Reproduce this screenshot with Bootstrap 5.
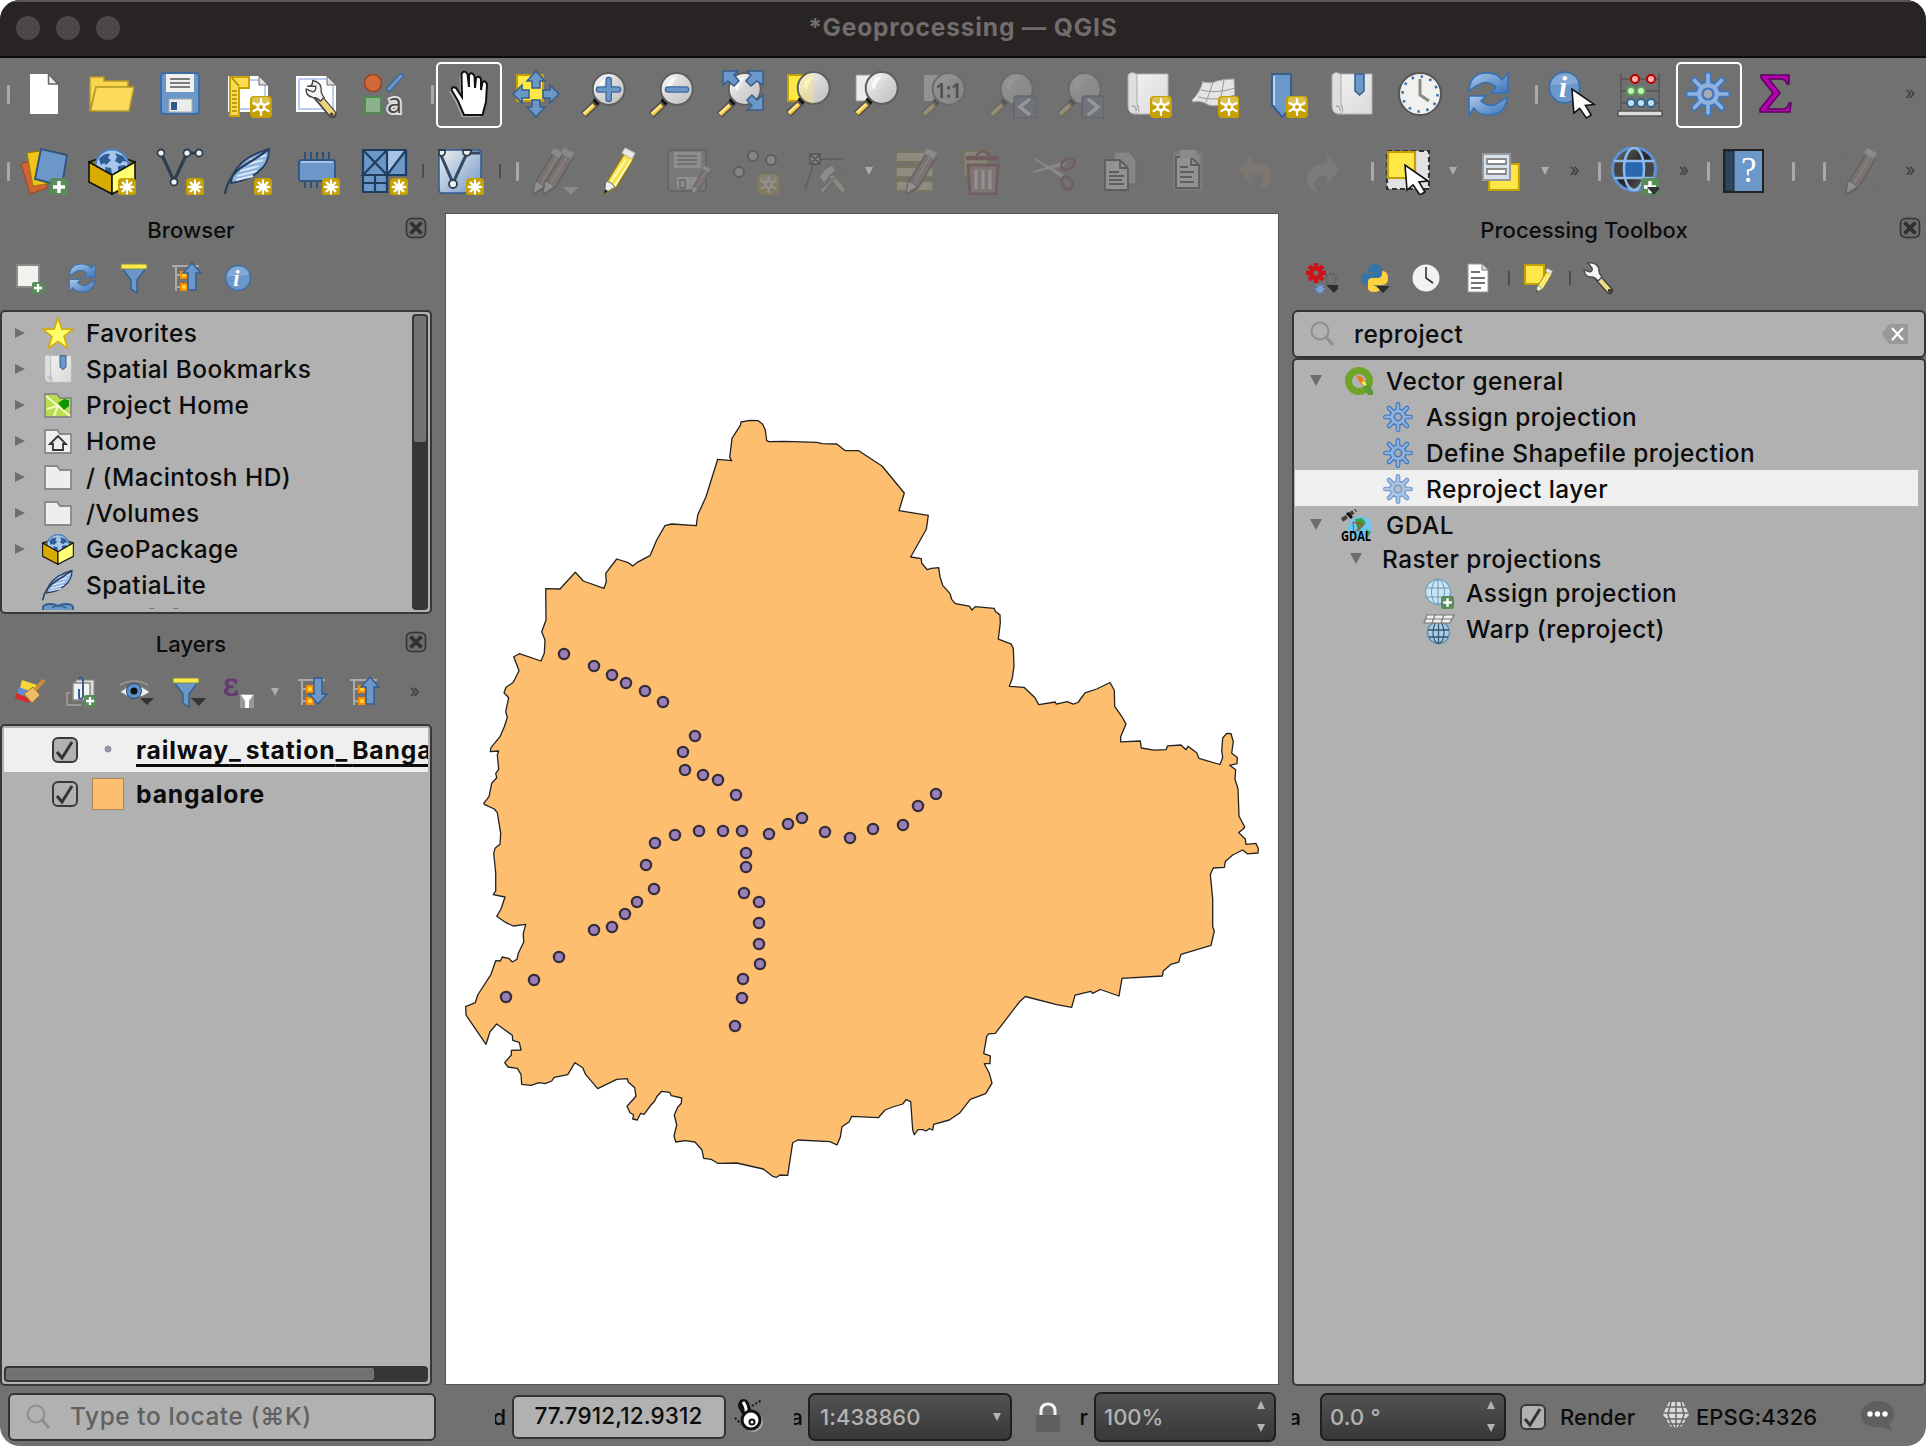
<!DOCTYPE html>
<html lang="en">
<head>
<meta charset="utf-8">
<title>*Geoprocessing — QGIS</title>
<link href="https://cdn.jsdelivr.net/npm/bootstrap@5.3.0/dist/css/bootstrap.min.css" rel="stylesheet">
<style>
html,body{width:1926px;height:1446px;overflow:hidden;background:#fff}
body{font-family:Inter,"Liberation Sans",sans-serif;font-size:24.4px;font-weight:500;letter-spacing:.48px;line-height:1;color:#0c0c0c;white-space:nowrap}
svg{display:block;flex:none;overflow:visible;letter-spacing:0}
.win{width:1926px;height:1446px;background:#717171;border-radius:20px;overflow:hidden}
.titlebar{height:58px;background:#282423;border-top:2px solid #5a5756;border-bottom:2px solid #0a0a0a;color:#716d6c;font-weight:700;font-size:24.5px;letter-spacing:.85px;padding-bottom:4px}
.lights{left:16px;top:14px;gap:16px}
.lights i{width:24px;height:24px;border-radius:50%;background:#4c4847}
.bar1{height:72px}.bar2{height:82px}
.cell{width:68px;flex:none;display:flex;align-items:center;justify-content:center}
.cell>svg{width:48px;height:48px}
.off{opacity:.27}
.bar2 .off{opacity:.23;filter:saturate(.7)}
.boxed{position:relative}
.boxed::before{content:"";position:absolute;left:50%;top:50%;width:66px;height:66px;margin:-32px 0 0 -32px;border:2px solid #fff;border-radius:5px}
.grip{flex:none;display:flex;justify-content:flex-end}
.grip::after{content:"";width:3px;height:19px;border-radius:1px;background:#a9a9a9}
.w3x{width:3px}.w10{width:10px}.w11{width:11px}.w16{width:16px}.w17{width:17px}.w31{width:31px}
.sepr{width:9px;flex:none;display:flex;justify-content:center}
.sepr::after{content:"";width:2px;height:14px;background:#4c4c4c}
.tri{flex:none;display:flex;justify-content:center;align-items:center}
.tri::after{content:"";border:4px solid transparent;border-top:8px solid #adadad;border-bottom:0}
.more{flex:none;text-align:center;color:#3b3b3b;font-size:18px;font-weight:400;padding-bottom:2px}
.left{width:432px}.mapbox{width:834px;margin:1px 13px 1px 13px;border:1px solid #555;background:#fff}
.right{width:634px}
.ptitle{font-size:22px;letter-spacing:.05px;text-align:center;padding-top:0}
.psmall{width:52px;flex:none;display:flex;justify-content:center}
.psmall>svg{width:32px;height:32px}
.rsmall{width:52px;flex:none;display:flex;justify-content:center}
.rsmall>svg{width:32px;height:32px}
.pane{background:#b1b1b1;border:2px solid #383838;border-radius:5px;overflow:hidden}
.trow{height:36px;display:flex;align-items:center;flex:none;line-height:26px;padding-top:1px}
.trow svg.ti{width:32px;height:32px}
.ar{width:0;height:0;border:5px solid transparent;border-left:10px solid #6d6d6d;border-right:0;flex:none}
.ad{width:0;height:0;border:6px solid transparent;border-top:11px solid #6d6d6d;border-bottom:0;flex:none}
.vbar{width:16px;background:#363636;border-radius:4px;padding:2px}
.thumb{background:#717171;border-radius:3px;box-shadow:inset 0 0 0 1px #777}
.pick{background:#efefef}
.chk{width:26px;height:26px;border:2px solid #3a3a3a;border-radius:6px;flex:none;background:#b1b1b1}
.lay{font-weight:700;font-size:24.7px;letter-spacing:.85px;overflow:hidden;padding-bottom:1px}
.wide{letter-spacing:5px}
.fieldx{background:#b1b1b1;border:2px solid #333;border-radius:6px;display:flex;align-items:center;flex:none}
.spinx{background:linear-gradient(#525252,#383838);border:2px solid #1f1f1f;border-radius:7px;display:flex;align-items:center;flex:none;color:#b4b4b4;font-size:22px}
.up{border:4px solid transparent;border-bottom:8px solid #b4b4b4;border-top:0}
.dn{border:4px solid transparent;border-top:8px solid #b4b4b4;border-bottom:0}
.status{height:60px;font-size:22px;letter-spacing:0;padding-top:1px}
.clip{overflow:hidden;flex:none;display:flex;justify-content:flex-end;height:26px;align-items:center}
</style>
<script src="https://cdn.jsdelivr.net/npm/bootstrap@5.3.0/dist/js/bootstrap.bundle.min.js"></script>
</head>
<body>
<svg width="0" height="0" class="position-absolute">
<defs>
<linearGradient id="lens" x1="0" y1="0" x2="1" y2="1"><stop offset="0" stop-color="#fff"/><stop offset=".5" stop-color="#d6d6d6"/><stop offset="1" stop-color="#bfbfbf"/></linearGradient>
<linearGradient id="blu" x1="0" y1="0" x2="1" y2="1"><stop offset="0" stop-color="#a9c9ec"/><stop offset="1" stop-color="#3b74b8"/></linearGradient>
<linearGradient id="pap" x1="0" y1="0" x2="1" y2="1"><stop offset="0" stop-color="#f2f2f2"/><stop offset="1" stop-color="#d9d9d9"/></linearGradient>
<linearGradient id="vg" x1="0" y1="0" x2="1" y2="1"><stop offset="0" stop-color="#efefef"/><stop offset="1" stop-color="#6f98ca"/></linearGradient>
<linearGradient id="gband" x1="0" y1="0" x2="1" y2="1"><stop offset="0" stop-color="#777"/><stop offset=".5" stop-color="#222"/><stop offset="1" stop-color="#777"/></linearGradient>
</defs>
<symbol id="badge" viewBox="0 0 22 22"><rect width="22" height="22" rx="4" fill="#c6a000"/><rect x="2" y="1" width="18" height="9" rx="3" fill="#dbc14d"/><g stroke="#fff" stroke-width="2.2" stroke-linecap="round"><path d="M11 3v16M3.500 7l15 8M3.500 15l15-8"/></g><circle cx="11" cy="11" r="4.500" fill="#fff"/><circle cx="11" cy="11" r="2" fill="#c6a000"/></symbol>
<symbol id="star" viewBox="0 0 18 18"><rect width="18" height="18" rx="4" fill="#c6a000"/><path d="M9 2.500v13M2.800 9h12.400M4.600 4.600l8.800 8.800M4.600 13.400l8.800-8.800" stroke="#fff" stroke-width="2.300" stroke-linecap="round"/></symbol>
<symbol id="plus" viewBox="0 0 18 18"><rect width="18" height="18" rx="3" fill="#5a8c5a"/><path d="M9 3v12M3 9h12" stroke="#fff" stroke-width="3.400"/></symbol>
<symbol id="mag" viewBox="0 0 48 48"><path d="M17 32L3.500 45" stroke="#555" stroke-width="7.500"/><path d="M14 35L4 44.500" stroke="#fcca3f" stroke-width="4"/><path d="M13 35L3.500 43.500" stroke="#fff0b0" stroke-width="1.500"/><path d="M14 29l5 5" stroke="#111" stroke-width="4"/><circle cx="28.700" cy="19" r="16" fill="url(#lens)" stroke="#5f5f5f" stroke-width="2"/><path d="M18 17q3-9 11-10q-6 6-7 14z" fill="#fff" opacity=".8"/></symbol>
<symbol id="new" viewBox="0 0 48 48"><path d="M10 4h18.500l9.500 10v30H10z" fill="#fff"/><path d="M28.500 4l9.500 10h-9.500z" fill="#eee" stroke="#666" stroke-width="1.500"/></symbol>
<symbol id="open" viewBox="0 0 48 48"><path d="M2 41V7h14v4h24v6H8z" fill="#fad64e" stroke="#b59a28" stroke-width="1.500"/><path d="M2.500 41L8 17h38l-5 24z" fill="#fdd95c" stroke="#b59a28" stroke-width="1.500"/></symbol>
<symbol id="save" viewBox="0 0 48 48"><rect x="5" y="3" width="38" height="41" rx="3" fill="#6b97c9" stroke="#3e6ca3" stroke-width="2"/><path d="M10 4h28v18H10z" fill="#f0f0ee"/><path d="M14 9h20M14 13h20M14 17h20" stroke="#555" stroke-width="1.500"/><path d="M13 29h23v13H13z" fill="#ececec" stroke="#aaa"/><path d="M15 32h6v8h-6z" fill="#2f5a8c"/></symbol>
<symbol id="layout" viewBox="0 0 48 48"><path d="M4 6h31l9 9v27H4z" fill="#fff"/><path d="M8 10h27M41 15v24H8" fill="none" stroke="#bccdf5" stroke-width="2"/><path d="M35 6v9h9z" fill="#ddd" stroke="#666"/><path d="M6 7h19v11H15v28H6z" fill="#fbdc4e" stroke="#c9a100" stroke-width="2"/><path d="M8 21h5M8 25h5M8 29h5M8 33h5M8 37h5M8 41h5M8 8l7 8" stroke="#a88800" stroke-width="1.500"/><use href="#badge" x="26" y="26" width="22" height="22"/></symbol>
<symbol id="wrench" viewBox="0 0 48 48"><path d="M24 24L40 43" stroke="#444" stroke-width="9" stroke-linecap="round"/><path d="M27 27L39.500 42" stroke="#eed27a" stroke-width="6" stroke-linecap="round"/><path d="M13 13q6 1 6-6q10 2 9 12q1 4 3 6l-4 4q-3-4-8-4q-8-2-7-9l7 3q4-1 3-6z" fill="#f4f4f4" stroke="#444" stroke-width="1.500"/><circle cx="39" cy="43" r="2" fill="#444"/></symbol>
<symbol id="wrench2" viewBox="0 0 32 32"><path d="M17 17L27.500 28.500" stroke="#333" stroke-width="7" stroke-linecap="round"/><path d="M18 18L27 28" stroke="#eed98c" stroke-width="4.500" stroke-linecap="round"/><path d="M2 8l6 2q3-1 2-4L6 1q9-1 11 6-1 4 3 8l-4 4q-3-4-7-4-6 0-7-7z" fill="#f4f4f4" stroke="#444" stroke-width="1.300"/><circle cx="27.500" cy="28.500" r="1.700" fill="#333"/></symbol>
<symbol id="layman" viewBox="0 0 48 48"><path d="M4 6h31l9 9v27H4z" fill="#fff"/><path d="M7 9h27M41 15v24H7V9" fill="none" stroke="#bccdf5" stroke-width="2"/><path d="M35 6v9h9z" fill="#ddd" stroke="#666"/><use href="#wrench" x="3" y="4" width="45" height="45"/></symbol>
<symbol id="style" viewBox="0 0 48 48"><circle cx="13" cy="13" r="8.500" fill="#d1683a" stroke="#9d4318" stroke-width="1.500"/><path d="M29 19L41 6" stroke="#3f6797" stroke-width="6" stroke-linecap="round"/><path d="M29 19L41 6" stroke="#6c97ca" stroke-width="3" stroke-linecap="round"/><path d="M5 27h16v16H5z" fill="#8db08d" stroke="#4f8a4f" stroke-width="2"/></symbol>
<symbol id="hand" viewBox="0 0 48 48"><path d="M20 45L14 31 7.500 20Q8 16 12 18L18 27 17.500 4Q20-1 23.500 4L25 17V5Q27.500 1 30.500 6L31 18 32 8Q35 5 37 9V20L38.500 12Q41 10 43 14L42 32 38.500 45z" transform="translate(-2 2)" fill="#aaa"/><path d="M20 45L14 31 7.500 20Q8 16 12 18L18 27 17.500 4Q20-1 23.500 4L25 17V5Q27.500 1 30.500 6L31 18 32 8Q35 5 37 9V20L38.500 12Q41 10 43 14L42 32 38.500 45z" fill="#fff" stroke="#111" stroke-width="2"/></symbol>
<symbol id="pan" viewBox="0 0 48 48"><path d="M5 5h26v26H5z" fill="#fde847" stroke="#c6a000" stroke-width="2"/><g fill="#6b97c9" stroke="#375d8c" stroke-width="1.500"><path d="M24 1l9 10h-5v7h-8v-7h-5z"/><path d="M24 47l9-10h-5v-7h-8v7h-5z"/><path d="M1 24l9-9v5h7v8h-7v5z"/><path d="M47 24l-9-9v5h-7v8h7v5z"/></g></symbol>
<symbol id="zin" viewBox="0 0 48 48"><use href="#mag"/><path d="M28.700 10v19M19 19.500h19" stroke="#3d679a" stroke-width="6.500" stroke-linecap="round"/><path d="M28.700 10v19M19 19.500h19" stroke="#6b97c9" stroke-width="4" stroke-linecap="round"/></symbol>
<symbol id="zout" viewBox="0 0 48 48"><use href="#mag"/><path d="M20 19.500h18" stroke="#3d679a" stroke-width="6.500" stroke-linecap="round"/><path d="M20 19.500h18" stroke="#6b97c9" stroke-width="4" stroke-linecap="round"/></symbol>
<symbol id="zfull" viewBox="0 0 48 48"><use href="#mag"/><g fill="#6b97c9" stroke="#375d8c" stroke-width="1.500"><path d="M7 1h15l-4 4 5 6-5 5-6-5-5 4z"/><path d="M47 1H31l4 4-5 6 5 5 6-5 6 4z"/><path d="M47 40H31l5-4-5-6 5-5 5 5 6-5z"/></g></symbol>
<symbol id="zsel" viewBox="0 0 48 48"><path d="M4 5h18v26H4z" fill="#fde847" stroke="#c6a000" stroke-width="2"/><use href="#mag" x="1" y="-1"/><path d="M30 3.500v30q-14-1-15-15 1-14 15-15z" fill="#fbe96a" opacity=".4"/></symbol>
<symbol id="zlay" viewBox="0 0 48 48"><path d="M4 5h18v26H4z" fill="#ececea" stroke="#999" stroke-width="1"/><use href="#mag" x="1" y="-1"/></symbol>
<symbol id="znat" viewBox="0 0 48 48"><path d="M4 5h18v26H4z" fill="#ececea"/><use href="#mag"/></symbol>
<symbol id="zprev" viewBox="0 0 48 48"><use href="#mag"/><rect x="26" y="26" width="22" height="22" rx="2" fill="#6b7f99" stroke="#223"/><path d="M42 29l-10 8 10 8" fill="none" stroke="#fff" stroke-width="3.500"/></symbol>
<symbol id="znext" viewBox="0 0 48 48"><use href="#mag"/><rect x="26" y="26" width="22" height="22" rx="2" fill="#6b7f99" stroke="#223"/><path d="M32 29l10 8-10 8" fill="none" stroke="#fff" stroke-width="3.500"/></symbol>
<symbol id="scroll" viewBox="0 0 48 48"><path d="M8 4h36v40H10q6-2 4-9H12z" fill="url(#pap)" stroke="#b5b5b5"/><path d="M4 5q4-5 9 0v30q5 9-3 9-6-1-6-8z" fill="#dedede" stroke="#aaa"/><path d="M8 36q5 0 4 5" fill="none" stroke="#888"/></symbol>
<symbol id="nmap" viewBox="0 0 48 48"><use href="#scroll"/><use href="#badge" x="26" y="26" width="22" height="22"/></symbol>
<symbol id="n3d" viewBox="0 0 48 48"><path d="M12 12q9 2 14-1 7-2 17-2l1 26-13-1q-10 4-17-1-6-3-12-1l-1-2q8-7 11-19z" fill="#e4e4e4" stroke="#aaa"/><path d="M10 20q15 4 34-2M7 27q18 5 37-2M22 12q-3 10-7 20M33 10q-2 14-5 24" fill="none" stroke="#999"/><use href="#badge" x="27" y="26" width="22" height="22"/></symbol>
<symbol id="nbm" viewBox="0 0 48 48"><path d="M12 4h19v34l-9 9-10-12z" fill="#6b97c9" stroke="#365e8e" stroke-width="2"/><path d="M14 6v29" stroke="#bcd4ee" stroke-width="2"/><use href="#badge" x="26" y="26" width="22" height="22"/></symbol>
<symbol id="bms" viewBox="0 0 48 48"><use href="#scroll"/><path d="M27 4h9v17l-4.500 4L27 21z" fill="#6b97c9" stroke="#365e8e" stroke-width="1.500"/></symbol>
<symbol id="clock" viewBox="0 0 48 48"><circle cx="24" cy="24" r="21" fill="#f1f1ef" stroke="#555" stroke-width="2"/><circle cx="24" cy="24" r="17.500" fill="none" stroke="#3f74ac" stroke-width="2.600" stroke-dasharray="2.600 6.563"/><path d="M24 9v16l9 6" fill="none" stroke="#8a8a86" stroke-width="3"/></symbol>
<symbol id="refresh" viewBox="0 0 48 48"><path d="M5 21Q6 3 23 3q11 0 15 7l6-7v20H27l5-6q-9-8-18-2-5 3-9 6z" fill="url(#blu)" stroke="#3470b5" stroke-width="1.500"/><path d="M43 27q-1 18-18 18-11 0-15-7l-5 7V26h17l-5 5q9 8 17 2 5-3 9-6z" fill="url(#blu)" stroke="#3470b5" stroke-width="1.500"/></symbol>
<symbol id="info" viewBox="0 0 48 48"><circle cx="24" cy="24" r="21" fill="#6b97c9" stroke="#3d6ea6" stroke-width="2.500"/><path d="M5 20Q8 6 24 5t19 13q-20 4-38 2z" fill="#9dbbe0" opacity=".5"/></symbol>
<symbol id="cursor" viewBox="0 0 26 32"><path d="M1 1l2 25 6-5 7 10 5-3-6-10 9-1z" fill="#fff" stroke="#111" stroke-width="1.600"/></symbol>
<symbol id="abacus" viewBox="0 0 48 48"><path d="M5 4v38M43 4v38M5 9h38M5 21h38M5 33h38" stroke="#555" stroke-width="1.500"/><path d="M2 41h44v5H2z" fill="#ddd" stroke="#555" stroke-width="1.500"/><g stroke-width="2"><g fill="#ffb0b0" stroke="#b00"><circle cx="19" cy="9" r="4"/><circle cx="35" cy="9" r="4"/></g><g fill="#c8f5b8" stroke="#58a058"><circle cx="15" cy="21" r="4"/><circle cx="25" cy="21" r="4"/></g><g fill="#bfe3f5" stroke="#356488"><circle cx="15" cy="33" r="4"/><circle cx="25" cy="33" r="4"/><circle cx="35" cy="33" r="4"/></g></g></symbol>
<symbol id="gear" viewBox="0 0 48 48"><path d="M24 5v38M5 24h38M10.500 10.500l27 27M10.500 37.500l27-27" stroke="#3d78c4" stroke-width="7" stroke-linecap="round"/><circle cx="24" cy="24" r="13" fill="#3d78c4"/><path d="M24 5v38M5 24h38M10.500 10.500l27 27M10.500 37.500l27-27" stroke="#91b1dc" stroke-width="3.600" stroke-linecap="round"/><circle cx="24" cy="24" r="11" fill="#91b1dc"/><circle cx="24" cy="24" r="5.500" fill="#a9abb0" stroke="#3d78c4" stroke-width="2.200"/></symbol>
<symbol id="sigma" viewBox="0 0 48 48"><path d="M9 5h28v9h-2q-1-5-7-5H17l11 14-13 16h15q6 0 7-6h2l-1 9H8v-3l13-16L9 8z" fill="#b300b0" stroke="#5d005c" stroke-width="1.500"/></symbol>
<symbol id="dsm" viewBox="0 0 48 48"><path d="M1 17l18-6 8 30-17 6z" fill="#cf6534" stroke="#97461f"/><path d="M7 6l20-3 4 33-18 3z" fill="#f0c419" stroke="#9c7d00"/><path d="M21 2l26 6-5 31-27-7z" fill="#6b97c9" stroke="#34557c" stroke-width="2"/><use href="#plus" x="30" y="31" width="18" height="18"/></symbol>
<symbol id="gpkg" viewBox="0 0 48 48"><path d="M1 15l23-8 23 8-23 15z" fill="#8b7a20" stroke="#111" stroke-width="1.600"/><circle cx="24" cy="19" r="16.500" fill="#a8c6ec" stroke="#4a80bd" stroke-width="2"/><path d="M11 12q5-6 11-5l-2 4 3 2-5 5-2-2-3 2zM17 20l6 1 1 6-3 3-3-4zM27 6l8 3 4 6-4-1-3 3-5-3 2-4zM30 19l7-1 1 5-4 5-4-4z" fill="#2f5c92"/><path d="M1 15l23 13v19L1 35z" fill="#d7ab00" stroke="#111" stroke-width="1.600"/><path d="M47 15L24 28v19l23-12z" fill="#ffff74" stroke="#111" stroke-width="1.600"/></symbol>
<symbol id="ngpkg" viewBox="0 0 48 48"><use href="#gpkg"/><use href="#star" x="30" y="31" width="18" height="18"/></symbol>
<symbol id="nshp" viewBox="0 0 48 48"><path d="M5 6l13 28L31 6h12" fill="none" stroke="#2c3f52" stroke-width="3.200"/><g fill="#f2f2f2" stroke="#2c3f52" stroke-width="1.800"><circle cx="5" cy="6" r="3.500"/><circle cx="18" cy="35" r="3.500"/><circle cx="31" cy="6" r="3.500"/><circle cx="43" cy="6" r="3.500"/></g><use href="#star" x="30" y="31" width="18" height="18"/></symbol>
<symbol id="feather" viewBox="0 0 48 48"><path d="M7 36Q8 22 24 11 34 5 45 2q0 15-10 22-9 9-28 12z" fill="#8fb5e2" stroke="#263f5e" stroke-width="1.800"/><path d="M13 29l20-5M16 24l19-5M21 18l18-5M26 13l16-5M12 33l17-4" stroke="#dceafa" stroke-width="1.800"/><path d="M1 47q3-19 20-29Q33 11 45 2" fill="none" stroke="#263f5e" stroke-width="2.200"/></symbol>
<symbol id="nfeather" viewBox="0 0 48 48"><use href="#feather"/><use href="#star" x="30" y="31" width="18" height="18"/></symbol>
<symbol id="chip" viewBox="0 0 48 48"><path d="M13 5v36M19 5v36M25 5v36M31 5v36M37 5v36" stroke="#2f5079" stroke-width="2"/><rect x="7" y="13" width="36" height="21" rx="2" fill="#6b97c9" stroke="#2f5684" stroke-width="1.800"/><path d="M9 15h32" stroke="#bcd2ec" stroke-width="1.500"/><use href="#star" x="30" y="31" width="18" height="18"/></symbol>
<symbol id="mesh" viewBox="0 0 48 48"><path d="M3 3h43v25H27v17H3z" fill="#6b97c9"/><path d="M27 28V3h19z" fill="#a5c4e8"/><path d="M3 3h43v25H27v17H3zM3 3l24 25M27 3L3 28h24V3M46 3L27 28M3 36h24M15 28v17" fill="none" stroke="#1f3d5f" stroke-width="2.200"/><use href="#star" x="30" y="31" width="18" height="18"/></symbol>
<symbol id="virt" viewBox="0 0 48 48"><rect x="2" y="3" width="42" height="43" rx="3" fill="url(#vg)" stroke="#2f5b90" stroke-width="1.500"/><path d="M3 6l13 30L30 6h13" fill="none" stroke="#354a60" stroke-width="3"/><g fill="#f2f2f2" stroke="#2c3f52" stroke-width="1.800"><path d="M2 3h6q1 5-3 6l-3-1zM26 3h8q0 5-4 6-5-1-4-6z"/><circle cx="16" cy="37" r="4"/></g><use href="#star" x="29" y="31" width="18" height="18"/></symbol>
<symbol id="pencil" viewBox="0 0 48 48"><path d="M30 7l10 4-18 30-11 6 1-11z" fill="#f3e14e" stroke="#8b7d1d" stroke-width="1.500"/><path d="M32 12L15 38M37 13L20 40" stroke="#fff9b3" stroke-width="2"/><path d="M12 34l-2 13 11-7q-3-5-9-6z" fill="#eee" stroke="#666"/><path d="M11 42l-1 5 4-3z" fill="#222"/><path d="M28 6l3-5 10 5-3 6z" fill="#e8e8e8" stroke="#bbb"/></symbol>
<symbol id="bpen" viewBox="0 0 48 48"><path d="M30 7l10 4-18 30-11 6 1-11z" fill="#a87a70" stroke="#442f2c" stroke-width="1.500"/><path d="M34 10L17 38" stroke="#d3b0a8" stroke-width="1.500"/><path d="M12 34l-2 13 11-7q-3-5-9-6z" fill="#eee" stroke="#333"/><path d="M28 6l3-5 10 5-3 6z" fill="#ddd" stroke="#aaa"/></symbol>
<symbol id="pens" viewBox="0 0 48 48"><use href="#bpen" x="-8"/><use href="#bpen" x="2"/><path d="M32 40h16l-8 8z" fill="#ddd"/></symbol>
<symbol id="sedit" viewBox="0 0 48 48"><rect x="3" y="3" width="38" height="41" rx="3" fill="#8b9099" stroke="#3b4350" stroke-width="2"/><path d="M9 5h27v16H9zM12 30h20v12H12z" fill="#eee"/><path d="M12 9h20M12 13h20M12 17h20" stroke="#444" stroke-width="1.500"/><path d="M15 33h5v8h-5z" fill="none" stroke="#444" stroke-width="1.500"/><use href="#bpen" x="20" y="18" width="30" height="30"/></symbol>
<symbol id="points" viewBox="0 0 48 48"><g fill="#c8d0c8" stroke="#223" stroke-width="2"><circle cx="20" cy="9" r="5"/><circle cx="38" cy="13" r="5"/><circle cx="6" cy="25" r="5"/></g><use href="#badge" x="25" y="27" width="21" height="21"/></symbol>
<symbol id="vertex" viewBox="0 0 48 48"><path d="M14 12L4 43M16 12h26" stroke="#333" stroke-width="2"/><path d="M9 7h10v10H9zM9 7l10 10M19 7L9 17" fill="#ccc" stroke="#111" stroke-width="1.800"/><path d="M19 30q5-9 12-11l3 4-5 5-6 7z" fill="#e6e6e6"/><path d="M28 30l4-3 13 16-4 3z" fill="#e8dcae" stroke="#554"/><path d="M45 20L28 38l-6 8-3-3 8-7z" fill="#e8dcae" stroke="#554"/></symbol>
<symbol id="multi" viewBox="0 0 48 48"><path d="M4 5h37v10H4zM4 20h37v10H4zM4 34h37v10H4z" fill="#f4e29a" stroke="#a18300" stroke-width="1.800"/></symbol>
<symbol id="trash" viewBox="0 0 48 48"><path d="M2 4h24v25H2z" fill="#ddc97a" stroke="#a18300" stroke-width="1.800"/><path d="M6 18h30l-2 29H8z" fill="#c08080" stroke="#901818" stroke-width="3"/><path d="M14 23v19M21 23v19M28 23v19" stroke="#fff" stroke-width="3"/><path d="M4 11h33" stroke="#901818" stroke-width="4.500"/><path d="M14 9q7-9 14 0" fill="none" stroke="#901818" stroke-width="2.500"/></symbol>
<symbol id="cut" viewBox="0 0 48 48"><path d="M5 12l30 17-2 2zM3 25l31-10v3z" fill="#eee" stroke="#ccc" stroke-width="1.500"/><g fill="none" stroke="#901d1d" stroke-width="2.600"><ellipse cx="38" cy="17" rx="7" ry="5" transform="rotate(-28 38 17)"/><ellipse cx="37" cy="36" rx="5" ry="7" transform="rotate(-25 37 36)"/></g></symbol>
<symbol id="copy" viewBox="0 0 48 48"><path d="M17 5h15l7 8v24H17z" fill="#ccc" stroke="#555"/><path d="M8 13h15l8 8v22H8z" fill="#fff" stroke="#222" stroke-width="1.800"/><path d="M23 13v8h8M12 25h10M12 29h15M12 33h13M12 37h15" fill="none" stroke="#222" stroke-width="1.800"/></symbol>
<symbol id="paste" viewBox="0 0 48 48"><path d="M11 6h26v36H11z" fill="#e8d5b8" stroke="#b59b75" stroke-width="3"/><path d="M12 10h15l8 8v23H12z" fill="#fff" stroke="#222" stroke-width="1.800"/><path d="M27 10v8h8M16 20h8M16 25h14M16 30h12M16 35h14" fill="none" stroke="#222" stroke-width="1.800"/><path d="M16 3h16v8H16z" fill="#ddd"/></symbol>
<symbol id="undo" viewBox="0 0 48 48"><path d="M5 23L17 8v9h10q12 2 10 15-2 9-14 9 8-4 6-11-1-3-5-3h-7v10z" fill="#b08a70" stroke="#b08058"/></symbol>
<symbol id="redo" viewBox="0 0 48 48"><path d="M42 22L30 8v8q-17 1-20 14-1 12 11 15-7-6-3-11 3-5 12-5v9z" transform="translate(-3)" fill="#96a396" stroke="#7f937f"/></symbol>
<symbol id="sel" viewBox="0 0 48 48"><path d="M3 4h42v38H3z" fill="#e2e2e2" stroke="#333" stroke-width="2.200" stroke-dasharray="5 3"/><path d="M4 5h27v26H4z" fill="#fde847" stroke="#c6a000" stroke-width="2.200"/><use href="#cursor" x="19" y="17" width="28" height="32"/></symbol>
<symbol id="form" viewBox="0 0 48 48"><path d="M9 17h30v26H9z" fill="#fde847" stroke="#c6a000" stroke-width="2.200"/><path d="M3 7h27v26H3z" fill="#d6e1ee" stroke="#999" stroke-width="2"/><path d="M7 12h19v5H7zM7 22h19v5H7z" fill="#fff" stroke="#888" stroke-width="1.800"/></symbol>
<symbol id="globe" viewBox="0 0 48 48"><circle cx="23" cy="22" r="21.500" fill="url(#gband)" stroke="#5b92d6" stroke-width="3"/><path d="M4 14h38v17H4z" fill="#444"/><path d="M14 14h18v17H14z" fill="#2868b0"/><path d="M3 14h40M3 31h40" stroke="#8db9ec" stroke-width="2.500"/><ellipse cx="23" cy="22" rx="10" ry="21" fill="none" stroke="#8db9ec" stroke-width="2.500"/></symbol>
<symbol id="pglobe" viewBox="0 0 48 48"><use href="#globe"/><use href="#plus" x="30" y="31" width="18" height="18"/><path d="M36 40h14l-7 8z" fill="#333"/></symbol>
<symbol id="help" viewBox="0 0 48 48"><path d="M4 3h39v42H4z" fill="#6b97c9" stroke="#222" stroke-width="2"/><path d="M5 4h9v40H5z" fill="#31455a" stroke="#1d2935"/></symbol>
<symbol id="dpen" viewBox="0 0 48 48"><path d="M4 5h40v40H4zM4 5l40 40M44 5L4 45" fill="none" stroke="#556" opacity=".4"/><use href="#bpen"/></symbol>
<symbol id="close" viewBox="0 0 22 22"><rect x="1.500" y="1.500" width="19" height="19" rx="5" fill="#6c6c6c" stroke="#333" stroke-width="1.600"/><path d="M5.500 5.500l11 11M16.500 5.500l-11 11" stroke="#303030" stroke-width="3.800"/></symbol>
<symbol id="addl" viewBox="0 0 32 32"><path d="M3 3h22v22H3z" fill="#f2f2f0" stroke="#8a8a84" stroke-width="1.800"/><use href="#plus" x="18" y="20" width="12" height="12"/></symbol>
<symbol id="funnel" viewBox="0 0 32 32"><path d="M4 6h24L19 18v13l-6-4v-9z" fill="#6b97c9" stroke="#345f93" stroke-width="1.400"/><path d="M3 2h26v5H3z" fill="#fde847" stroke="#7d8a54" stroke-width="1.200"/></symbol>
<symbol id="treei" viewBox="0 0 32 32"><path d="M1 4h27M5 5v24M5 13h6M5 25h6" stroke="#aaa" stroke-width="2"/><path d="M10 10h6v6h-6zM10 22h6v6h-6z" fill="#ffd23c" stroke="#ff8c00" stroke-width="2"/></symbol>
<symbol id="coll" viewBox="0 0 32 32"><use href="#treei"/><path d="M21 1l9 10h-5v17h-8V11h-5z" fill="#6b97c9" stroke="#34608f" stroke-width="1.500"/></symbol>
<symbol id="expa" viewBox="0 0 32 32"><use href="#treei"/><path d="M21 28l9-10h-5V2h-8v16h-5z" fill="#6b97c9" stroke="#34608f" stroke-width="1.500"/></symbol>
<symbol id="fav" viewBox="0 0 32 32"><path d="M16 1l3.800 11.200L31 12l-9 7.500L25.500 31 16 24.500 6.500 31 10 19.500 1 12l11.200.2z" fill="#ffff6b" stroke="#d6a900" stroke-width="1.500"/></symbol>
<symbol id="folder" viewBox="0 0 32 32"><path d="M3 5h12l3 4h11v19H3z" fill="#eee" stroke="#8b8b84" stroke-width="1.800"/></symbol>
<symbol id="homef" viewBox="0 0 32 32"><use href="#folder"/><path d="M8 19l8-8 8 8h-3v6H11v-6z" fill="none" stroke="#333" stroke-width="1.800"/></symbol>
<symbol id="proj" viewBox="0 0 32 32"><path d="M3 5h12l3 4h11v19H3z" fill="#b7df4d" stroke="#8b8b84" stroke-width="1.800"/><path d="M4 7l24 20M5 20l10-3M12 27l4-10" stroke="#f5fac8" stroke-width="2"/><path d="M16 14l6-4 5 1v6l-5 4z" fill="#0d9400"/></symbol>
<symbol id="paint" viewBox="0 0 32 32"><path d="M8 4l15 5-3 8-14-5z" fill="#f6d838"/><path d="M5 11l13 5-3 6-12-5z" fill="#5f8fd0"/><path d="M2 17l14 6-2 4-13-5z" fill="#d9282c"/><path d="M10 18l9-7 7 8-8 8z" fill="#edbe68" stroke="#a8762e"/><path d="M21 14l9-10" stroke="#c98d33" stroke-width="4"/></symbol>
<symbol id="addg" viewBox="0 0 32 32"><path d="M10 4h18v18H10z" fill="#ddd" stroke="#8a8a84"/><path d="M7 7h17v17H7z" fill="#f2f2f0" stroke="#8a8a84" stroke-width="1.500"/><path d="M4 17H1v12h14" fill="none" stroke="#999" stroke-width="1.800"/><path d="M13 13v9q3 2 4-1V3q-2-3-4 0" fill="none" stroke="#345f93" stroke-width="2"/><use href="#plus" x="18" y="19" width="12" height="12"/></symbol>
<symbol id="eye" viewBox="0 0 36 32"><path d="M2 16Q16 3 32 16 18 27 2 16z" fill="#eee" stroke="#777"/><circle cx="16" cy="15" r="7.500" fill="#5f92cd" stroke="#27466c"/><circle cx="16" cy="15" r="3.500" fill="#111"/><path d="M2 9q14-8 28 0" fill="none" stroke="#999" stroke-width="1.500"/><path d="M22 22h14l-7 7z" fill="#333"/></symbol>
<symbol id="eps" viewBox="0 0 32 32"><path d="M16 18h14v14H16z" fill="#999"/><path d="M17 19h12l-4 6v7h-4v-7z" fill="#fff"/></symbol>
<symbol id="rgears" viewBox="0 0 32 32"><path d="M10 1v20M0 11h20M3 4l14 14M17 4L3 18" stroke="#cf1218" stroke-width="4.500"/><circle cx="10" cy="11" r="7" fill="#cf1218"/><circle cx="10" cy="11" r="2.500" fill="#717171"/><circle cx="25" cy="17" r="5" fill="none" stroke="#5d5d5d" stroke-width="2" stroke-dasharray="2 1.500"/><use href="#gear" x="8" y="21" width="12" height="12"/><path d="M20 23h15l-7 8z" fill="#2d2d2d"/></symbol>
<symbol id="py" viewBox="0 0 32 32"><path d="M9 8q0-6 7-6t7 6v5q0 4-4 4h-6q-5 0-5 6-6 0-6-6t6-6h8v-1H9z" fill="#3673a8"/><path d="M22 24q0 6-7 6t-6-6v-4q0-4 4-4h6q5 0 4-7 6 0 6 7t-6 7h-8v1h7z" fill="#fed23f"/><path d="M17 24h14l-7 7z" fill="#2d2d2d"/></symbol>
<symbol id="whclk" viewBox="0 0 32 32"><circle cx="16" cy="16" r="13.500" fill="#f1f2f1"/><path d="M16 5v11l7 5" fill="none" stroke="#333" stroke-width="1.600"/></symbol>
<symbol id="doc" viewBox="0 0 32 32"><path d="M6 2h14l6 6v22H6z" fill="#fff" stroke="#999"/><path d="M20 2v6h6" fill="#ddd" stroke="#777"/><path d="M9 10h9M9 16h14M9 21h14M9 26h10" stroke="#444" stroke-width="1.600"/></symbol>
<symbol id="note" viewBox="0 0 32 32"><path d="M3 3h19v19H3z" fill="#fde847" stroke="#c6a000" stroke-width="2"/><use href="#pencil" x="9" y="6" width="25" height="25"/></symbol>
<symbol id="qlogo" viewBox="0 0 32 32"><circle cx="15" cy="16" r="10.500" fill="none" stroke="#6ea428" stroke-width="7"/><path d="M17 17l5-1 7 10v4h-5z" fill="#5c9a38"/><path d="M12 10l6 2 3 7-5-1z" fill="#ee7913"/><path d="M17 17l4-1 2 4-3 1z" fill="#f7e34a"/></symbol>
<symbol id="gdal" viewBox="0 0 32 32"><circle cx="19" cy="19" r="12" fill="#6cc7f2"/><path d="M14 10l7-1 4 5-8 9zM25 20l5 3-4 6z" fill="#3f9b44"/><path d="M12 13l10 3-9 8z" fill="none" stroke="#c33"/><path d="M1 11L15 1" stroke="#444" stroke-width="4" stroke-dasharray="6 2"/><path d="M6 4l5 5" stroke="#111" stroke-width="3"/></symbol>
<symbol id="lglobe" viewBox="0 0 32 32"><circle cx="15" cy="15" r="12.500" fill="#c6e6f8" stroke="#7ba7c2" stroke-width="1.500"/><path d="M15 3v25M3 11h24M3 20h24" stroke="#7196ad"/><ellipse cx="15" cy="15" rx="6.500" ry="12.500" fill="none" stroke="#7196ad"/></symbol>
<symbol id="aglobe" viewBox="0 0 32 32"><use href="#lglobe"/><use href="#plus" x="18" y="19" width="13" height="13"/></symbol>
<symbol id="wglobe" viewBox="0 0 32 32"><circle cx="15.500" cy="19.500" r="11" fill="#a9cde6" stroke="#5f8dae" stroke-width="1.300"/><path d="M15.500 10v20M5 17h21M6 24h19" stroke="#35566e" stroke-width="1.300"/><ellipse cx="15.500" cy="19.500" rx="5.500" ry="11" fill="none" stroke="#35566e" stroke-width="1.200"/><path d="M4 2h27l-4 8H1zM2 6h27M12 2l-3 8M21 2l-3 8" fill="#eee" stroke="#777" stroke-width="1.200"/></symbol>
<symbol id="find" viewBox="0 0 26 26"><circle cx="11" cy="10" r="8.500" fill="none" stroke="#8f8f8f" stroke-width="2"/><path d="M17 16l7 8" stroke="#8f8f8f" stroke-width="3"/></symbol>
<symbol id="tick" viewBox="0 0 22 22"><path d="M3 13l5 6L18 3" fill="none" stroke="#333" stroke-width="3"/></symbol>
</svg>

<div class="win d-flex flex-column">
  <header class="titlebar position-relative d-flex align-items-center justify-content-center flex-shrink-0">
    <div class="lights position-absolute d-flex"><i></i><i></i><i></i></div>
    <span>*Geoprocessing — QGIS</span>
  </header>

  <div class="bar1 d-flex align-items-center flex-shrink-0">
    <span class="grip w10"></span>
    <span class="cell"><svg><use href="#new"/></svg></span><span class="cell"><svg><use href="#open"/></svg></span><span class="cell"><svg><use href="#save"/></svg></span><span class="cell"><svg><use href="#layout"/></svg></span><span class="cell"><svg><use href="#layman"/></svg></span><span class="cell"><svg><use href="#style"/><text x="27" y="43" font-size="27" font-family="Open Sans" stroke="#ddd" stroke-width="4" paint-order="stroke" fill="#444">a</text></svg></span>
    <span class="grip w16"></span>
    <span class="cell boxed"><svg><use href="#hand"/></svg></span><span class="cell"><svg><use href="#pan"/></svg></span><span class="cell"><svg><use href="#zin"/></svg></span><span class="cell"><svg><use href="#zout"/></svg></span><span class="cell"><svg><use href="#zfull"/></svg></span><span class="cell"><svg><use href="#zsel"/></svg></span><span class="cell"><svg><use href="#zlay"/></svg></span><span class="cell off"><svg><use href="#znat"/><text x="15.500" y="27.500" font-size="22" font-weight="700" textLength="26" lengthAdjust="spacingAndGlyphs" font-family="Open Sans">1:1</text></svg></span><span class="cell off"><svg><use href="#zprev"/></svg></span><span class="cell off"><svg><use href="#znext"/></svg></span><span class="cell"><svg><use href="#nmap"/></svg></span><span class="cell"><svg><use href="#n3d" x="-1"/></svg></span><span class="cell"><svg><use href="#nbm"/></svg></span><span class="cell"><svg><use href="#bms"/></svg></span><span class="cell"><svg><use href="#clock"/></svg></span><span class="cell"><svg><use href="#refresh"/></svg></span>
    <span class="grip w16"></span>
    <span class="cell"><svg><use href="#info" x="-1" y="0" width="35" height="35"/><text x="11" y="27" font-family="Liberation Serif" font-style="italic" font-weight="700" font-size="29" fill="#fff">i</text><use href="#cursor" x="23" y="18" width="25" height="31"/></svg></span><span class="cell"><svg><use href="#abacus"/></svg></span><span class="cell boxed"><svg><use href="#gear"/></svg></span><span class="cell"><svg><use href="#sigma"/></svg></span>
    <span class="more ms-auto" style="width:31px">»</span>
  </div>

  <div class="bar2 d-flex align-items-center flex-shrink-0">
    <span class="grip w10"></span>
    <span class="cell"><svg><use href="#dsm"/></svg></span><span class="cell"><svg><use href="#ngpkg"/></svg></span><span class="cell"><svg><use href="#nshp"/></svg></span><span class="cell"><svg><use href="#nfeather"/></svg></span><span class="cell"><svg><use href="#chip"/></svg></span><span class="cell"><svg><use href="#mesh"/></svg></span>
    <span class="sepr"></span><span class="cell"><svg><use href="#virt"/></svg></span><span class="sepr"></span>
    <span class="grip w17" style="padding-right:2px"></span>
    <span class="cell off"><svg><use href="#pens"/></svg></span><span class="cell"><svg><use href="#pencil" x="-5"/></svg></span><span class="cell off"><svg><use href="#sedit" x="-2"/></svg></span><span class="cell off"><svg><use href="#points" x="-2"/></svg></span><span class="cell off"><svg><use href="#vertex" x="-2"/></svg></span>
    <span class="tri" style="width:16px"></span><span style="width:5px"></span>
    <span class="cell off"><svg><use href="#multi"/><use href="#bpen" x="4"/></svg></span><span class="cell off"><svg><use href="#trash" x="2"/></svg></span><span class="cell off"><svg><use href="#cut" x="2"/></svg></span><span class="cell off"><svg><use href="#copy" x="1"/></svg></span><span class="cell off"><svg><use href="#paste"/></svg></span><span class="cell off"><svg><use href="#undo" x="2"/></svg></span><span class="cell off"><svg><use href="#redo"/></svg></span>
    <span class="grip w16"></span>
    <span class="cell"><svg><use href="#sel"/></svg></span><span class="tri" style="width:22px"></span>
    <span class="cell" style="width:74px"><svg><use href="#form" x="3"/></svg></span><span class="tri" style="width:14px"></span>
    <span class="more" style="width:46px">»</span><span class="grip w3x"></span>
    <span class="cell"><svg><use href="#pglobe"/></svg></span><span class="more" style="width:30px">»</span><span class="grip w11"></span>
    <span class="cell"><svg><use href="#help"/><text x="21" y="35" font-family="Liberation Serif" font-size="35" font-weight="400" fill="#fff">?</text></svg></span><span class="grip w17"></span><span class="grip w31"></span>
    <span class="cell off"><svg><use href="#dpen"/></svg></span>
    <span class="more ms-auto" style="width:31px">»</span>
  </div>

  <main class="d-flex flex-shrink-0" style="height:1174px">
    <aside class="left d-flex flex-column flex-shrink-0">
      <div class="d-flex align-items-center" style="height:36px"><div class="ptitle" style="width:380px;padding-left:2px">Browser</div><svg width="22" height="22" style="margin-left:25px;margin-top:-4px"><use href="#close"/></svg></div>
      <div class="d-flex align-items-center ps-1" style="height:60px;margin-bottom:2px">
        <span class="psmall"><svg><use href="#addl"/></svg></span><span class="psmall"><svg><use href="#refresh"/></svg></span><span class="psmall"><svg><use href="#funnel"/></svg></span><span class="psmall"><svg><use href="#coll" x="1"/></svg></span><span class="psmall"><svg viewBox="-3 -3 54 54"><use href="#info" width="48" height="48"/><text x="16" y="37" font-family="Liberation Serif" font-style="italic" font-weight="700" font-size="38" fill="#fff">i</text></svg></span>
      </div>
      <div class="pane d-flex" style="height:304px">
        <div class="flex-grow-1 overflow-hidden" style="padding:2px 0 0 13px;height:298px">
          <div class="trow"><i class="ar"></i><svg class="ti" style="margin:0 12px 0 17px"><use href="#fav"/></svg>Favorites</div>
          <div class="trow"><i class="ar"></i><svg class="ti" style="margin:0 12px 0 17px"><use href="#bms"/></svg>Spatial Bookmarks</div>
          <div class="trow"><i class="ar"></i><svg class="ti" style="margin:0 12px 0 17px"><use href="#proj"/></svg>Project Home</div>
          <div class="trow"><i class="ar"></i><svg class="ti" style="margin:0 12px 0 17px"><use href="#homef"/></svg>Home</div>
          <div class="trow"><i class="ar"></i><svg class="ti" style="margin:0 12px 0 17px"><use href="#folder"/></svg>/ (Macintosh HD)</div>
          <div class="trow"><i class="ar"></i><svg class="ti" style="margin:0 12px 0 17px"><use href="#folder"/></svg>/Volumes</div>
          <div class="trow"><i class="ar"></i><svg class="ti" style="margin:0 12px 0 17px"><use href="#gpkg"/></svg>GeoPackage</div>
          <div class="trow"><svg class="ti" style="margin:0 12px 0 27px"><use href="#feather"/></svg>SpatiaLite</div>
          <div style="padding-left:27px"><svg width="150" height="20"><path d="M1 16V5q1-3 7-3 5 0 8 2 3-2 8-2 6 0 7 3v11z" fill="#6b97c9" stroke="#345f93" stroke-width="2"/><path d="M10 6q6-5 14 0" fill="none" stroke="#345f93" stroke-width="1.500"/><path d="M107 6.500h5M131 6.500h5" stroke="#777" stroke-width="1"/></svg></div>
        </div>
        <div class="vbar" style="margin:2px"><div class="thumb" style="height:126px"></div></div>
      </div>
      <div class="d-flex align-items-center" style="height:60px"><div class="ptitle" style="width:380px;padding-left:2px">Layers</div><svg width="22" height="22" style="margin-left:25px;margin-top:-4px"><use href="#close"/></svg></div>
      <div class="d-flex align-items-center ps-1" style="height:36px;margin-bottom:14px">
        <span class="psmall"><svg><use href="#paint"/></svg></span><span class="psmall"><svg><use href="#addg"/></svg></span><span class="psmall"><svg><use href="#eye" x="0" width="36"/></svg></span><span class="psmall"><svg><use href="#funnel"/><path d="M21 22h15l-7 8z" fill="#333"/></svg></span><span class="psmall"><svg><use href="#eps" x="2"/><text x="1" y="19" font-family="DejaVu Serif" font-weight="400" font-size="30" fill="#65386e" stroke="#65386e">ε</text></svg></span>
        <span class="tri" style="width:22px"></span><span style="width:4px"></span>
        <span class="psmall"><svg><use href="#expa" x="1"/></svg></span><span class="psmall"><svg><use href="#coll" x="1"/></svg></span><span class="more" style="width:50px">»</span>
      </div>
      <div class="pane d-flex flex-column p-0" style="height:662px">
        <div class="pick d-flex align-items-center" style="height:44px;margin:2px 2px 0">
          <span class="chk" style="margin-left:48px"><svg width="22" height="22"><use href="#tick"/></svg></span>
          <svg width="32" height="32" style="margin:0 12px 0 14px"><circle cx="16" cy="15" r="3" fill="#a38dbb" stroke="#888"/></svg>
          <span class="lay"><u style="text-decoration-skip-ink:none;text-decoration-thickness:2.500px;text-underline-offset:5px;line-height:36px">railway<span class="wide">_</span>station<span class="wide">_</span>Bangalore</u></span>
        </div>
        <div class="d-flex align-items-center" style="height:44px;margin:0 2px">
          <span class="chk" style="margin-left:48px"><svg width="22" height="22"><use href="#tick"/></svg></span>
          <svg width="32" height="32" style="margin:0 12px 0 14px"><path d="M.5.5h31v31H.5z" fill="#fdbe70" stroke="#a98556"/></svg>
          <span class="lay" style="line-height:36px">bangalore</span>
        </div>
        <div class="vbar mt-auto" style="width:424px;height:16px;margin:0 2px 2px"><div class="thumb h-100" style="width:368px"></div></div>
      </div>
    </aside>

    <section class="mapbox flex-shrink-0">
      <svg width="832" height="1170" viewBox="446 214 832 1170">
        <path fill="#fdbe70" stroke="#222" stroke-width="1.300" stroke-linejoin="round" d="M741 422L750 420.300 758.300 420.700 762.700 424.300 765.300 430 766.700 440.700 769 441.700 785 441.300 816.700 442.300 822 443.700 836.700 444 845.300 450.700 858.700 450.700 882 466 904.300 493 899 510.700 928.300 515.300 926.300 529.300 910.700 557 921.300 558.700 921.700 563.300 927.300 569.700 931.300 568.300 938.700 567.700 940 576.700 942.700 585.400 950 593.600 951.700 599.300 955.300 603.600 969.300 606.200 972 610 975.300 606.600 994 608.400 995.700 611.800 1000 614.900 1000.300 623 998.300 639.200 1011 643.900 1013.300 648.300 1014 666.500 1012.300 678.200 1009.300 686.400 1024 687.300 1035 697.700 1038.700 704.600 1055.300 702 1056.300 704.200 1067.300 701.600 1073.300 704.200 1078 702.500 1085 692.900 1096.700 689 1110 682.500 1114.300 690.300 1114.700 706.400 1121.700 716.300 1126 724.100 1120.700 736.700 1120.700 741.900 1140.300 741 1141.300 748 1154 750.200 1166 749.700 1167.700 745.800 1181 745 1186 749.700 1188 746.300 1196.700 752.800 1199 758.400 1220 764.500 1222.700 757.500 1221.700 751 1222.700 738 1226.700 733.300 1231 733.700 1233.300 741.500 1231.700 753.200 1237.300 757.500 1237 763.600 1229.700 765.300 1235.700 769.700 1235 779.200 1238 788.800 1239 816 1244.700 827 1242.700 829.500 1238.700 832.600 1245.300 839 1246 844.300 1256 843.400 1258.300 848.600 1258 853 1247.300 853.800 1242.700 850 1232.700 855 1225.300 861.600 1224.300 867.300 1213.300 868 1210.300 874.600 1212.700 898.500 1212.700 926.700 1214.300 931 1211 945.300 1181 954.400 1178.700 962.200 1170.700 964.400 1163.300 970.900 1162.300 976 1122 978.300 1119 996 1100.300 989.500 1092.700 993.400 1090.700 991.300 1075 995.200 1071.700 1007.300 1056.700 1004.700 1025.300 996.500 1019.300 1002.100 995.300 1033.300 988.700 1033.800 986.700 1036.400 983.700 1053.700 990.300 1055.900 990 1063.700 984.300 1063.700 989.300 1073.200 992 1083.200 985.700 1093.600 970.300 1099.300 960 1112.700 949.300 1120 933.700 1124.300 932.700 1130 929.300 1128.700 926 1131 922.700 1129.700 918 1129.700 914.300 1134.700 912.700 1130 910.700 1101.700 906 1099.700 902.700 1104 892.700 1107 885 1110 878.300 1117.700 851.700 1116.300 849 1122 842 1126.700 840.300 1137.300 837 1145 830 1141.700 797.700 1140 792.700 1142.700 787.700 1175.300 780 1175 776.700 1177.300 773.300 1176.700 763.300 1169 736.700 1163 717.700 1163.300 711 1159.300 703.700 1158.300 702 1150 695 1142 685 1140.700 675.700 1142 674 1136 676.700 1125 674.300 1115 677.700 1107.300 681.300 1103.300 681.700 1098 671.300 1095.700 669.700 1092.300 661.700 1091.300 656.700 1096.700 654.700 1101 651 1105 644 1114.300 640.700 1113.300 637.300 1120 632.700 1119 633.700 1114.700 630 1112.700 627 1106.300 636 1096.300 634.700 1087.700 628 1081.700 627.300 1078.700 616.700 1079.300 597.700 1088.700 585.700 1074.700 582.700 1067.700 575 1062.700 567.700 1074.700 554.300 1077.300 551.700 1081 545 1083.700 539.300 1082.700 531 1085.300 521.700 1084.300 521 1074.300 517.300 1068.300 508 1067 504.700 1062.700 511.300 1055 511.300 1050.300 521 1050 519.300 1042.300 512.700 1040.300 512.300 1035.300 505 1030 496.700 1024 490 1031.700 486 1044.300 466 1015 465.700 1006.700 475.300 1002.700 477.700 995 491 974.300 495.700 960.700 500.300 961 502.300 957 508.700 958.300 512.300 962 517 959.300 518.300 953.300 523.700 942.300 523.300 933.300 525.700 924.300 513.300 926 506 922.700 496.700 916.300 501 909 505 897 493.300 894.700 495.700 891 495.700 873.300 493.700 853.300 495 848.300 500 844.300 500.700 833.300 497.300 812.700 494.300 809 484.700 804.700 483.700 803.300 489 796.700 491.700 783.300 496.700 777.700 495.700 773.300 498.700 769.300 497.300 755 498.700 751 490.300 751.700 491 747.700 500 736.700 504.300 726.700 507.300 717.300 505.700 711.700 508.700 697.700 504 692.700 506 687.300 513.300 682.300 519 670.700 513.700 656.700 519.300 653.700 541 661 544.300 653.300 545 640 541.700 631.700 546 620 545.700 588.700 560 589 575.300 572.300 583.300 581 604 588.300 606.300 581.700 605.700 573.300 616.700 559 628.300 562.700 632.700 566 636.700 562.700 650 555.700 656.700 540 665 525.700 671.700 524 696.300 525.700 697.700 515 706 496.700 717.700 459.300 731.700 460.700 729.700 457.300 732 438.300 740.300 425.300z"/>
        <g id="stations" fill="#9a7eb8" stroke="#352e3a" stroke-width="2.300"></g>
      </svg>
    </section>

    <aside class="right d-flex flex-column flex-shrink-0">
      <div class="d-flex align-items-center" style="height:36px"><div class="ptitle" style="width:584px">Processing Toolbox</div><svg width="22" height="22" style="margin-left:23px;margin-top:-4px"><use href="#close"/></svg></div>
      <div class="d-flex align-items-center" style="height:60px;margin-bottom:2px;padding-left:4px">
        <span class="rsmall"><svg><use href="#rgears"/></svg></span><span class="rsmall"><svg><use href="#py" x="1"/></svg></span><span class="rsmall"><svg><use href="#whclk"/></svg></span><span class="rsmall"><svg><use href="#doc"/></svg></span><span class="sepr"></span><span class="rsmall"><svg><use href="#note" x="-1"/></svg></span><span class="sepr"></span><span class="rsmall"><svg><use href="#wrench2" x="-2"/></svg></span>
      </div>
      <div class="fieldx" style="height:48px">
        <svg width="26" height="26" style="margin:0 19px 0 15px"><use href="#find"/></svg><span class="flex-grow-1">reproject</span>
        <svg width="26" height="20" style="margin-right:16px"><path d="M0 10L7 0h19v20H7z" fill="#999"/><path d="M10 4l11 12M21 4L10 16" stroke="#fff" stroke-width="2.200"/></svg>
      </div>
      <div class="pane" style="height:1028px;padding:2px 6px 0 1px">
        <div class="trow"><i class="ad" style="margin-left:15px"></i><svg class="ti" style="margin:0 11px 0 21px"><use href="#qlogo" x="1"/></svg><span>Vector general</span></div>
        <div class="trow"><svg class="ti" style="margin:0 12px 0 87px"><use href="#gear"/></svg>Assign projection</div>
        <div class="trow"><svg class="ti" style="margin:0 12px 0 87px"><use href="#gear"/></svg>Define Shapefile projection</div>
        <div class="trow pick"><svg class="ti" style="margin:0 12px 0 87px;opacity:.7"><use href="#gear"/></svg>Reproject layer</div>
        <div class="trow"><i class="ad" style="margin-left:15px"></i><svg class="ti" style="margin:0 13px 0 19px"><use href="#gdal"/><text x="0" y="32" font-family="Open Sans" font-weight="700" font-size="14" textLength="30" lengthAdjust="spacingAndGlyphs" fill="#000">GDAL</text></svg>GDAL</div>
        <div class="trow" style="height:32px"><i class="ad" style="margin:0 20px 0 55px"></i>Raster projections</div>
        <div class="trow"><svg class="ti" style="margin:0 12px 0 127px"><use href="#aglobe" x="1"/></svg>Assign projection</div>
        <div class="trow"><svg class="ti" style="margin:0 12px 0 127px"><use href="#wglobe" x="1"/></svg>Warp (reproject)</div>
      </div>
    </aside>
  </main>

  <footer class="status d-flex align-items-center">
    <div class="fieldx" style="width:428px;height:48px;margin-left:8px;color:#606060;font-size:24.400px;letter-spacing:.6px"><svg width="26" height="26" style="margin:0 19px 0 15px"><use href="#find"/></svg>Type to locate (⌘K)</div>
    <span class="clip" style="width:11px;margin-left:59px">d</span>
    <div class="fieldx justify-content-center" style="width:214px;height:44px;margin-left:6px;padding-right:1px;font-size:22.500px;letter-spacing:.15px">77.7912,12.9312</div>
    <svg width="30" height="34" style="margin:0 0 4px 8px"><path d="M4 9q0-8 6-8 4 0 6 7l3 10-8 3z" fill="#111"/><path d="M9 4q4 5 3 12" fill="none" stroke="#fff" stroke-width="3"/><circle cx="19" cy="24" r="10" fill="#aaa"/><circle cx="17" cy="22" r="9" fill="#fff" stroke="#111" stroke-width="3"/><circle cx="18" cy="24" r="2.500" fill="none" stroke="#111" stroke-width="2"/><path d="M1 20l6 6M18 8l10-6" stroke="#111" stroke-width="2" stroke-dasharray="2 2"/></svg>
    <span class="clip" style="width:9px;margin-left:30px">a</span>
    <div class="spinx" style="width:204px;height:48px;margin-left:5px;padding:0 9px 0 10px;letter-spacing:.1px"><span class="flex-grow-1">1:438860</span><i class="dn"></i></div>
    <svg width="24" height="32" style="margin-left:24px"><path d="M5 16V9q1-6 7-6t7 6v7" fill="none" stroke="#f4f4ee" stroke-width="3"/><path d="M0 14h24v15q0 2-2 2H2q-2 0-2-2z" fill="#5e5e5e"/></svg>
    <span class="clip" style="width:9px;margin-left:19px">r</span>
    <div class="spinx" style="width:182px;height:50px;margin-left:6px;padding:0 9px 0 8px"><span class="flex-grow-1">100%</span><span class="d-flex flex-column" style="gap:15px"><i class="up"></i><i class="dn"></i></span></div>
    <span class="clip" style="width:9px;margin-left:16px">a</span>
    <div class="spinx" style="width:186px;height:48px;margin-left:19px;padding:0 9px 0 8px;letter-spacing:.2px"><span class="flex-grow-1">0.0 °</span><span class="d-flex flex-column" style="gap:15px"><i class="up"></i><i class="dn"></i></span></div>
    <span class="chk" style="margin:0 14px"><svg width="22" height="22"><use href="#tick"/></svg></span>
    <span style="width:75px">Render</span>
    <svg width="28" height="28" style="margin:-4px 6px 0 27px"><path d="M7 1h14l5 10q2 3-1 5l-5 9q-6 4-12 0l-5-9q-3-2-1-5z" fill="#dcdcdc"/><path d="M14 1v26M9 1L6 13q2 9 6 14M19 1l3 12q-2 9-6 14M4 6h20M1 12h26M3 18h22M6 23h16" fill="none" stroke="#686868" stroke-width="1.500"/></svg>
    <span style="width:120px;letter-spacing:.1px">EPSG:4326</span>
    <svg width="34" height="32" style="margin-left:45px"><path d="M17 0q16 1 16 14 0 6-5 9l3 7-10-4q-20 2-21-12Q1 1 17 0z" fill="#5f5f5f"/><g fill="#fff"><circle cx="9" cy="13" r="2.700"/><circle cx="16.500" cy="13" r="2.700"/><circle cx="24" cy="13" r="2.700"/></g></svg>
  </footer>
</div>
<script>
// Railway station positions in canvas coordinates
const stations = [[564,654],[594,666],[612,675],[626,683],[645,691],[663,702],[695,736],[683,752],[685,770],[703,775],[718,780],[736,795],[918,806],[936,794],[655,843],[675,835],[699,831],[723,831],[742,831],[769,834],[788,824],[802,818],[825,832],[850,838],[873,829],[903,825],[746,853],[746,867],[646,865],[654,889],[637,902],[625,914],[612,927],[594,930],[559,957],[534,980],[506,997],[744,893],[759,902],[759,923],[759,944],[760,964],[743,979],[742,998],[735,1026]];
document.getElementById('stations').innerHTML = stations.map(p => `<circle cx="${p[0]}" cy="${p[1]}" r="5.1"/>`).join('');
</script>
</body>
</html>
